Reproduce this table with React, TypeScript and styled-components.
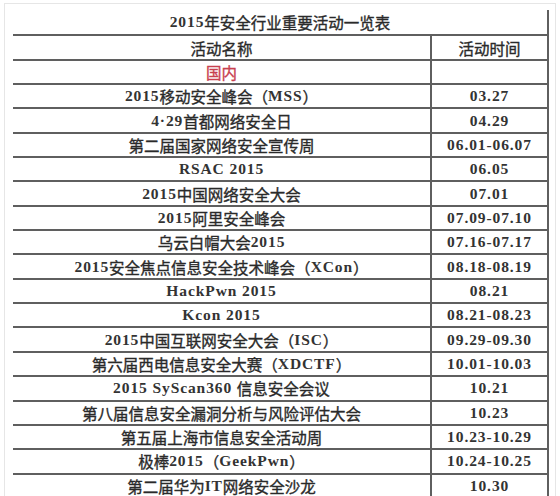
import React from "react";
import styled, { createGlobalStyle } from "styled-components";

const Global = createGlobalStyle`
  html, body { margin: 0; padding: 0; background: #ffffff; }
  body { font-family: "Noto Sans CJK SC", "Liberation Serif", serif; }
`;

const Frame = styled.div`
  margin: 3px 4px 0 4px;
  height: 493px;
  border: 1px solid #e6e6e6;
  border-bottom: none;
  padding: 6px 6px 0 8px;
  box-sizing: border-box;
  overflow: hidden;
`;

const Table = styled.div`
  display: grid;
  grid-template-columns: 419px 1fr;
  grid-auto-rows: 24.35px;
  border-right: 2px solid #5f5f5f;
  color: #2a2a2a;
  font-size: 15.5px;
`;

const Title = styled.div`
  grid-column: 1 / span 2;
  height: 23px;
  display: flex;
  align-items: center;
  justify-content: center;
  padding-top: 1px;
  box-sizing: border-box;
`;

const Cell = styled.div<{ $head?: boolean; $divider?: boolean; $red?: boolean }>`
  height: ${(p) => (p.$head ? "26px" : "24.35px")};
  border-top: 2px solid #5f5f5f;
  border-right: ${(p) => (p.$divider ? "2px solid #5f5f5f" : "none")};
  box-sizing: border-box;
  display: flex;
  align-items: center;
  justify-content: center;
  white-space: nowrap;
  color: ${(p) => (p.$red ? "#c8404f" : "inherit")};
`;

const Han = styled.span`
  -webkit-text-stroke: 0.35px currentColor;
`;

const Latin = styled.span`
  font-family: "Liberation Serif", serif;
  font-weight: 700;
  font-size: 15.5px;
  letter-spacing: 0.9px;
  color: #333333;
`;

const Mixed = ({ text }: { text: string }) => {
  const parts = text.split(/([\u0000-\u00ff]+)/).filter((s) => s.length > 0);
  return (
    <>
      {parts.map((p, i) =>
        /^[\u0000-\u00ff]+$/.test(p) ? (
          <Latin key={i}>{p.replace(/ /g, "\u00a0")}</Latin>
        ) : (
          <Han key={i}>{p}</Han>
        )
      )}
    </>
  );
};

type Item = { name: string; time: string; red?: boolean };

const items: Item[] = [
  { name: "国内", time: "", red: true },
  { name: "2015移动安全峰会（MSS）", time: "03.27" },
  { name: "4·29首都网络安全日", time: "04.29" },
  { name: "第二届国家网络安全宣传周", time: "06.01-06.07" },
  { name: "RSAC 2015", time: "06.05" },
  { name: "2015中国网络安全大会", time: "07.01" },
  { name: "2015阿里安全峰会", time: "07.09-07.10" },
  { name: "乌云白帽大会2015", time: "07.16-07.17" },
  { name: "2015安全焦点信息安全技术峰会（XCon）", time: "08.18-08.19" },
  { name: "HackPwn 2015", time: "08.21" },
  { name: "Kcon 2015", time: "08.21-08.23" },
  { name: "2015中国互联网安全大会（ISC）", time: "09.29-09.30" },
  { name: "第六届西电信息安全大赛（XDCTF）", time: "10.01-10.03" },
  { name: "2015 SyScan360 信息安全会议", time: "10.21" },
  { name: "第八届信息安全漏洞分析与风险评估大会", time: "10.23" },
  { name: "第五届上海市信息安全活动周", time: "10.23-10.29" },
  { name: "极棒2015（GeekPwn）", time: "10.24-10.25" },
  { name: "第二届华为IT网络安全沙龙", time: "10.30" },
];

export default function App() {
  return (
    <>
      <Global />
      <Frame>
        <Table>
          <Title>
            <Mixed text="2015年安全行业重要活动一览表" />
          </Title>
          <Cell $head $divider>
            <Mixed text="活动名称" />
          </Cell>
          <Cell $head>
            <Mixed text="活动时间" />
          </Cell>
          {items.map((it, i) => (
            <React.Fragment key={i}>
              <Cell $divider $red={it.red}>
                <Mixed text={it.name} />
              </Cell>
              <Cell>
                <Mixed text={it.time} />
              </Cell>
            </React.Fragment>
          ))}
        </Table>
      </Frame>
    </>
  );
}
